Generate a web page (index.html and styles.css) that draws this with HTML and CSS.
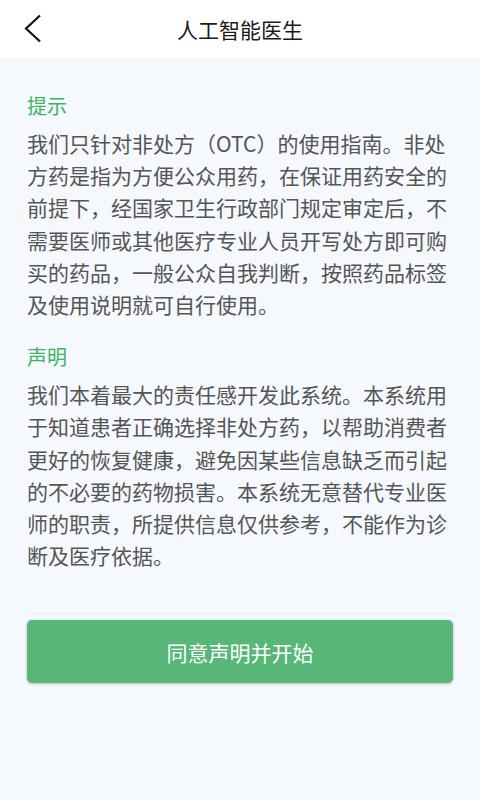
FILE: index.html
```html
<!DOCTYPE html>
<html lang="zh">
<head>
<meta charset="utf-8">
<link rel="stylesheet" href="styles.css">
</head>
<body>
<header class="bar">
  <svg class="back" width="20" height="30" viewBox="0 0 20 30"><path d="M16 1.5 L2 14.5 L16 27.5" fill="none" stroke="#111" stroke-width="2.2"/></svg>
  <h1 class="title">人工智能医生</h1>
</header>
<main class="content">
  <section class="block">
    <h2 class="head">提示</h2>
    <p class="text">我们只针对非处方（OTC）的使用指南。非处方药是指为方便公众用药，在保证用药安全的前提下，经国家卫生行政部门规定审定后，不需要医师或其他医疗专业人员开写处方即可购买的药品，一般公众自我判断，按照药品标签及使用说明就可自行使用。</p>
  </section>
  <section class="block">
    <h2 class="head">声明</h2>
    <p class="text">我们本着最大的责任感开发此系统。本系统用于知道患者正确选择非处方药，以帮助消费者更好的恢复健康，避免因某些信息缺乏而引起的不必要的药物损害。本系统无意替代专业医师的职责，所提供信息仅供参考，不能作为诊断及医疗依据。</p>
  </section>
  <div class="divider"></div>
  <button class="start">同意声明并开始</button>
</main>
</body>
</html>
```
FILE: styles.css
```css
* { box-sizing: border-box; }
html, body { margin: 0; padding: 0; }
body {
  width: 480px;
  height: 800px;
  background: #f5f8fc;
  font-family: "Noto Sans CJK SC", "Noto Sans", sans-serif;
  overflow: hidden;
}
.bar {
  height: 58px;
  background: #ffffff;
  display: flex;
  align-items: center;
  justify-content: center;
  position: relative;
}
.back {
  position: absolute;
  left: 24px;
  top: 14px;
}
.title {
  margin: 0;
  font-size: 21px;
  font-weight: 400;
  color: #1a1a1a;
  line-height: 1;
}
.content {
  padding: 33px 27px 0;
}
.block { margin-bottom: 22px; }
.head {
  margin: 0 0 6px;
  font-size: 20px;
  font-weight: 400;
  color: #3cb464;
  line-height: 30px;
}
.text {
  margin: 0;
  font-size: 21px;
  line-height: 32.2px;
  color: #555555;
}
.divider {
  height: 1px;
  background: #ebebeb;
  margin: 42px 2px 0;
}
.start {
  display: block;
  width: 100%;
  height: 63px;
  margin-top: 6px;
  border: none;
  border-radius: 5px;
  background: #56b776;
  color: #ffffff;
  font-family: inherit;
  font-size: 21px;
  box-shadow: 0 1px 3px rgba(0,0,0,0.25);
}
```
